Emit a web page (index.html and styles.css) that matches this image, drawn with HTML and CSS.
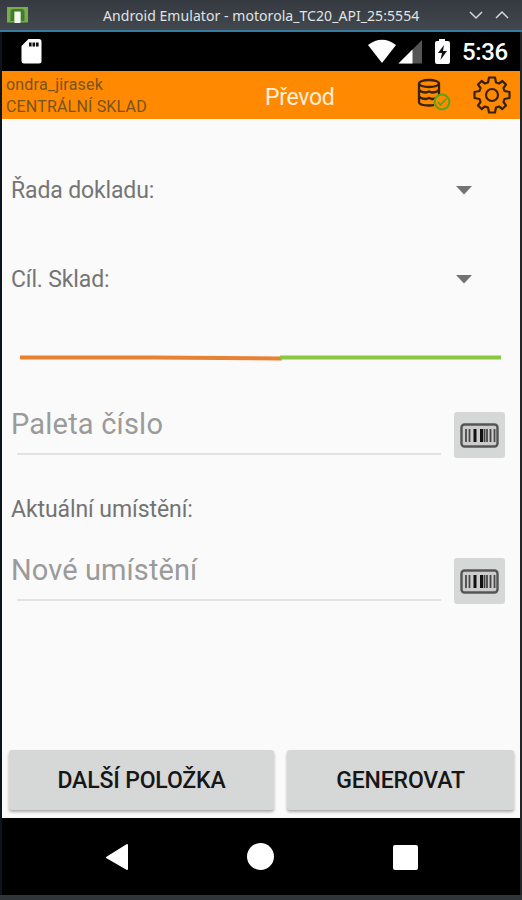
FILE: index.html
```html
<!DOCTYPE html>
<html lang="cs">
<head>
<meta charset="utf-8">
<title>Převod</title>
<link rel="stylesheet" href="styles.css">
</head>
<body>
<div class="window">
  <div class="titlebar">
    <svg class="app-icon" width="21" height="16" viewBox="0 0 21 16"><path d="M0 0h21v15.500H0z" fill="#75ae4b"/><path d="M3.500 14V5q0-3 3-3h8q3 0 3 3v9h-3.500V5h-7v9z" fill="#477832"/><path d="M7.500 4.500h6V16h-6z" fill="#f4f6f0"/></svg>
    <span class="window-title">Android Emulator - motorola_TC20_API_25:5554</span>
    <svg class="window-controls" width="42" height="10" viewBox="0 0 42 10" fill="none" stroke="#d3d7da" stroke-width="1.500"><path d="M1 2l6 6 6-6M27 8l6-6 6 6"/></svg>
  </div>
  <div class="device">
    <div class="statusbar">
      <svg class="sd" width="21" height="25" viewBox="0 0 21 25"><path d="M7.500 0H18q2.500 0 2.500 2.500v19.500q0 2.500-2.500 2.500H3Q.5 24.500.5 22V7z" fill="#fff"/><path d="M8 3.500h2.600v4H8zM11.500 3.500h2.600v4h-2.600zM15 3.500h2.600v4H15z" fill="#111"/></svg>
      <svg class="signals" width="84" height="26" viewBox="0 0 84 26"><path d="M0 6Q14-4.500 28 6L14 24z" fill="#fff"/><path d="M30.500 24.500L54 1v23.500z" fill="#555"/><path d="M30.500 24.500L44.500 10.500v14z" fill="#fff"/><path d="M71 0h6v2h3q2 0 2 2v19q0 2-2 2H69q-2 0-2-2V4q0-2 2-2h2z" fill="#fff"/><path d="M76 6l-6 8h4l-1.500 7 6.500-9h-4z" fill="#111"/></svg>
      <span class="clock">5:36</span>
    </div>
    <header class="appbar">
      <div class="user"><div class="name">ondra_jirasek</div><div class="place">CENTRÁLNÍ SKLAD</div></div>
      <h1>Převod</h1>
      <svg class="db" width="34" height="34" viewBox="0 0 34 34" fill="none" stroke="#38210a" stroke-width="2.300"><ellipse cx="12" cy="5.500" rx="10" ry="3.500"/><path d="M2 5.500v5.500q0 3 7 3.500l3-1 3 1q7-.5 7-3.500V5.500M2 13v4.500q0 3 7 3.500l3-1 3 1q7-.5 7-3.500V13M2 19v5q0 3.500 10 3.500 3 0 5-.5M2 11v13M22 11v5"/><circle cx="25" cy="24" r="7.400" fill="#ff8900" stroke="#55a51c" stroke-width="2"/><path d="M21 24l2.500 3 6-6.500" stroke="#55a51c" stroke-width="1.800"/></svg>
      <svg class="gear" width="38" height="38" viewBox="0 0 38 38" fill="none" stroke="#38210a" stroke-width="2.200" stroke-linejoin="round"><path d="M16 1.500H22L23 6.500 26 7.500 29.400 5 33 8.600 30.500 12 31.500 15 36.500 16V22L31.500 23 30.500 26 33 29.400 29.400 33 26 30.500 23 31.500 22 36.500H16L15 31.500 12 30.500 8.600 33 5 29.400 7.500 26 6.500 23 1.500 22V16L6.500 15 7.500 12 5 8.600 8.600 5 12 7.500 15 6.500z"/><circle cx="19" cy="19" r="6"/></svg>
    </header>
    <main class="content">
      <div class="picker first"><span>Řada dokladu:</span><svg width="16" height="9" viewBox="0 0 16 9"><path d="M0 0h16L8 8.500z" fill="#737373"/></svg></div>
      <div class="picker second"><span>Cíl. Sklad:</span><svg width="16" height="9" viewBox="0 0 16 9"><path d="M0 0h16L8 8.500z" fill="#737373"/></svg></div>
      <svg class="divider" width="483" height="6" viewBox="0 0 483 6"><path d="M1 2.500h132l130 1" stroke="#e98132" stroke-width="4" fill="none"/><path d="M261 2.500h221" stroke="#8bc83f" stroke-width="4"/></svg>
      <div class="entry pallet">
        <div class="field">Paleta číslo</div>
        <div class="scan"><svg width="39" height="25" viewBox="0 0 39 25"><rect x="1.500" y="1.500" width="36" height="22" rx="3" fill="#ccc" stroke="#555" stroke-width="2.400"/><path d="M6 6v13M9.500 6v13M27 6v13M34.500 6v13" stroke="#4b4b4b" stroke-width="1.800"/><path d="M15 6v13M21.500 6v13" stroke="#111" stroke-width="3"/><path d="M24.500 6v13M30.500 6v13" stroke="#444" stroke-width="1.800"/></svg></div>
      </div>
      <div class="current">Aktuální umístění:</div>
      <div class="entry location">
        <div class="field">Nové umístění</div>
        <div class="scan"><svg width="39" height="25" viewBox="0 0 39 25"><rect x="1.500" y="1.500" width="36" height="22" rx="3" fill="#ccc" stroke="#555" stroke-width="2.400"/><path d="M6 6v13M9.500 6v13M27 6v13M34.500 6v13" stroke="#4b4b4b" stroke-width="1.800"/><path d="M15 6v13M21.500 6v13" stroke="#111" stroke-width="3"/><path d="M24.500 6v13M30.500 6v13" stroke="#444" stroke-width="1.800"/></svg></div>
      </div>
      <div class="actions"><button class="next">DALŠÍ POLOŽKA</button><button class="generate">GENEROVAT</button></div>
    </main>
    <nav class="navbar">
      <svg width="24" height="28" viewBox="0 0 24 28"><path d="M22 2v24L2 14.500z" fill="#fff" stroke="#fff" stroke-width="2" stroke-linejoin="round"/></svg>
      <div class="home"></div>
      <div class="recent"></div>
    </nav>
  </div>
</div>
</body>
</html>
```

FILE: styles.css
```css
* { box-sizing: border-box; }
body { margin: 0; font-family: Roboto, "Liberation Sans", sans-serif; }
.window { width: 522px; height: 900px; background: #30353a; display: flex; flex-direction: column; overflow: hidden; }
.titlebar { height: 32px; flex: none; display: flex; align-items: center; padding: 0 11px 0 7px; background: linear-gradient(#343a40, #42484e); border-bottom: 2px solid #347d9f; }
.window-title { font: 14px/20px "Noto Sans", sans-serif; color: #e0e3e5; margin: 1px 0 0 75px; letter-spacing: .06px; white-space: nowrap; }
.window-controls { margin-left: auto; }
.device { height: 863px; margin: 0 2px; display: flex; flex-direction: column; background: #000; box-shadow: -2px 0 #0b151a, 2px 0 #20262a; }
.statusbar { height: 39px; flex: none; display: flex; align-items: center; padding: 0 11px 0 19px; }
.signals { margin-left: auto; }
.clock { color: #fff; font-size: 24px; font-weight: 500; line-height: 30px; margin: 1px 0 0 10px; width: 47px; letter-spacing: -.4px; white-space: nowrap; }
.appbar { height: 48px; flex: none; background: #ff8900; display: flex; align-items: center; padding: 0 9px 0 4px; }
.user { width: 259px; color: #79531f; font-size: 16px; line-height: 22px; padding-top: 1px; white-space: nowrap; }
.name { letter-spacing: .2px; }
.place { letter-spacing: .18px; }
h1 { margin: 5px 0 0; width: 152px; color: #fff0da; font-size: 23px; font-weight: 400; line-height: 28px; letter-spacing: -.3px; }
.db { flex: none; }
.gear { margin-left: auto; flex: none; }
.content { height: 699px; flex: none; background: #fafafa; display: flex; flex-direction: column; }
.picker { display: flex; justify-content: space-between; align-items: center; height: 30px; flex: none; padding: 0 48px 0 9px; color: #757575; font-size: 23px; line-height: 30px; letter-spacing: -.14px; }
.first { margin-top: 57px; }
.second { margin-top: 59px; }
.picker svg { margin-bottom: 1px; }
.divider { margin: 60px 0 0 17px; flex: none; }
.entry { display: flex; align-items: flex-start; height: 46px; flex: none; padding-left: 9px; }
.pallet { margin-top: 51px; }
.field { width: 443px; height: 44px; font-size: 29px; line-height: 24px; letter-spacing: .2px; color: #9b9b9b; background: linear-gradient(#e2e2e2, #e2e2e2) 6px 41px / 424px 2px no-repeat; }
.scan { width: 51px; height: 46px; display: flex; align-items: center; justify-content: center; background: #d6d7d7; border-radius: 3px; }
.current { margin: 37px 0 0 9px; height: 30px; font-size: 23px; line-height: 30px; letter-spacing: -.08px; color: #737373; }
.location { margin-top: 33px; }
.location .field { letter-spacing: .1px; }
.actions { display: flex; gap: 13px; margin: auto 6px 8px 7px; }
button { height: 60px; padding: 1px 0 0; border: 0; border-radius: 3px; background: #d6d7d7; color: #161616; box-shadow: 0 2px 3px #aaa; font: 500 23px Roboto, sans-serif; letter-spacing: -.15px; }
.next { width: 265px; }
.generate { flex: 1; }
.navbar { flex: 1; display: flex; align-items: center; padding-left: 103px; }
.home { width: 27px; height: 27px; border-radius: 50%; background: #fff; margin-left: 118px; }
.recent { width: 25px; height: 25px; border-radius: 2px; background: #fff; margin: 1px 0 0 119px; }
```
